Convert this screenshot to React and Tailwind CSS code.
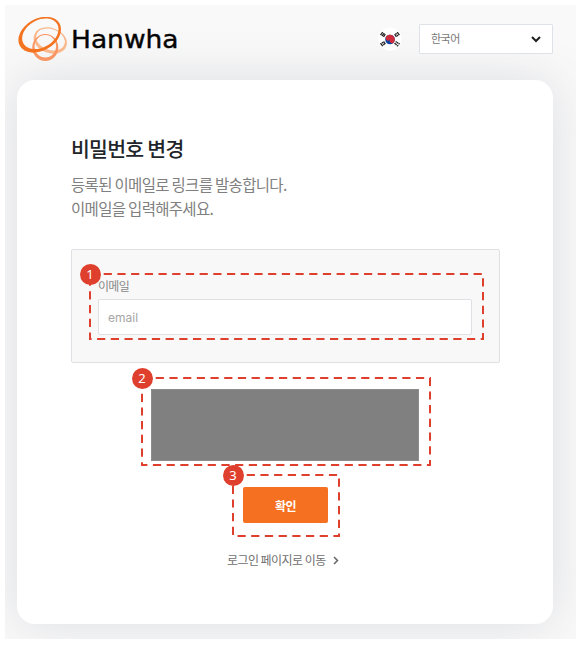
import React from "react";

function Logo() {
  return (
    <svg width="162" height="48" viewBox="0 0 162 48" className="block">
      <path
        fillRule="evenodd"
        fill="#fbb88c"
        d="M16.330 17.690A17 12.200 20 1 1 48.270 29.310A17 12.200 20 1 1 16.330 17.690ZM18.700 17.400A14.700 10.200 20 1 0 46.320 27.460A14.700 10.200 20 1 0 18.700 17.400Z"
      />
      <path
        fillRule="evenodd"
        fill="#f99562"
        d="M14.300 30.500A13 13.500 0 1 1 40.300 30.500A13 13.500 0 1 1 14.300 30.500ZM16.500 29.300A10.800 11.200 0 1 0 38.100 29.300A10.800 11.200 0 1 0 16.500 29.300Z"
      />
      <path
        fillRule="evenodd"
        fill="#f37321"
        d="M1.950 29.100A22.800 16 -30 1 1 41.450 6.300A22.800 16 -30 1 1 1.950 29.100ZM5.450 26.500A19.500 13.700 -30 1 0 39.230 7A19.500 13.700 -30 1 0 5.450 26.500Z"
      />
      <text
        x="53"
        y="30.500"
        textLength="107.500"
        lengthAdjust="spacingAndGlyphs"
        fill="#050505"
        stroke="#050505"
        strokeWidth="0.4"
        className="font-['DejaVu_Sans',sans-serif] text-[24px] font-normal"
      >
        Hanwha
      </text>
    </svg>
  );
}

function KoreanFlag() {
  return (
    <svg width="24" height="24" viewBox="0 0 24 24" className="block">
      <circle cx="12" cy="12" r="11.500" fill="#fff" />
      <circle cx="12" cy="12.500" r="4.800" fill="#0b45a5" />
      <path transform="translate(0 .5)" d="M8 9.330A4.800 4.800 0 0 1 16 14.670A2.400 2.400 0 0 1 12 12A2.400 2.400 0 0 1 8 9.330Z" fill="#cf2c3c" />
      <g stroke="#222" strokeWidth="1.300" fill="none">
        <path d="M2.500 8.100l2.200-3M4 9.100l2.200-3M5.500 9.800l1.800-2.600" />
        <path d="M19.200 5.100l2.200 3M17.700 6.100l.9 1.200M19.100 8l.9 1.200M16.600 7.200l1.900 2.600" />
        <path d="M2.500 16.200l2.200 3M4 15.200l.9 1.200M5.400 17l.9 1.200M5.500 14.500l1.900 2.600" />
        <path d="M19.200 19.300l.9-1.200M20.600 17.400l.9-1.200M17.700 18.200l.9-1.200M19.100 16.300l.9-1.200M16.600 17.100l.9-1.200M17.900 15.300l.6-.9" />
      </g>
    </svg>
  );
}

function Callout({ number, width, height, className }) {
  return (
    <div className={`pointer-events-none absolute ${className}`}>
      <svg width={width} height={height} className="block overflow-visible">
        <rect width={width} height={height} fill="none" stroke="#df402d" strokeWidth="2" strokeDasharray="8.200 5.500" />
      </svg>
      <span className="absolute -top-[10.500px] -left-[10.500px] flex size-[21px] items-center justify-center rounded-full bg-[#df402d] font-['Noto_Sans',sans-serif] text-[13px] leading-none text-white">
        {number}
      </span>
    </div>
  );
}

export default function App() {
  return (
    <div className="h-[646px] w-[577px] overflow-hidden bg-white pt-[5px] pl-[5px] font-['Noto_Sans_CJK_KR',sans-serif]">
      <div className="h-[634px] w-[571px] overflow-hidden bg-[#f9f9f9] px-3">
        <header className="flex h-[74.500px] items-start pt-3 pl-px">
          <div className="relative z-10"><Logo /></div>
          <div className="relative z-10 mt-[10px] ml-[198px]"><KoreanFlag /></div>
          <button className="relative z-10 mt-[7px] ml-[17px] flex h-[30px] w-[134px] shrink-0 items-center justify-between rounded-[1px] border border-[#dee2e6] bg-white pr-[11px] pl-[11px] text-[11px] tracking-[-0.500px] text-[#777]">
            <span className="-mt-[2px]">한국어</span>
            <svg width="10" height="7" viewBox="0 0 10 7" fill="none" stroke="#222" strokeWidth="2">
              <path d="M1 1l4 4l4-4" />
            </svg>
          </button>
        </header>

        <main className="flex h-[544.500px] w-[536px] flex-col rounded-[18px] bg-white px-[54px] pt-[52.500px] shadow-[0_0_50px_rgba(82,88,110,0.17)]">
          <h1 className="h-[34px] text-[20.500px] leading-[32px] font-medium tracking-[-0.750px] whitespace-nowrap text-[#212529]">비밀번호 변경</h1>
          <p className="mt-[6px] h-[48px] text-[15.500px] leading-[24px] font-normal tracking-[-0.690px] whitespace-nowrap text-[#808080]">
            등록된 이메일로 링크를 발송합니다.
            <br />
            이메일을 입력해주세요.
          </p>

          <section className="relative mt-[29px] h-[114px] w-[429px] rounded-[2px] border border-[#dee0e4] bg-[#f8f8f8] px-[26px] pt-[26px]">
            <label className="block h-[23px] text-[12px] leading-[19px] tracking-[-0.700px] text-[#888]">이메일</label>
            <input
              placeholder="email"
              className="block h-[36px] w-[374px] rounded-[2px] border border-[#dee0e4] bg-white px-[9px] font-['Inter',sans-serif] text-[12px] placeholder:text-[#a5a5a5]"
            />
            <Callout number={1} width={393} height={65} className="top-[24px] left-[18px]" />
          </section>

          <div className="relative mt-[26px] ml-[80px] h-[72px] w-[268px] border border-[#8b8d8c] bg-[#808080]">
            <Callout number={2} width={288} height={87} className="-top-[12px] -left-[10px]" />
          </div>

          <div className="relative mt-[26px] ml-[172px] w-[85px]">
            <button className="block h-[36px] w-full rounded-[2px] bg-[#f57121] pt-[2px] text-[12px] font-bold tracking-[-0.500px] text-white">확인</button>
            <Callout number={3} width={106} height={61} className="-top-[12px] -left-[10px]" />
          </div>

          <a className="mt-[27px] ml-[156px] flex items-center gap-[7px] text-[12px] leading-[20px] tracking-[-0.550px] whitespace-nowrap text-[#707070]">
            로그인 페이지로 이동
            <svg width="6" height="9" viewBox="0 0 6 9" fill="none" stroke="#666" strokeWidth="1.500">
              <path d="M1 1l3.500 3.500l-3.500 3.500" />
            </svg>
          </a>
        </main>
      </div>
    </div>
  );
}
